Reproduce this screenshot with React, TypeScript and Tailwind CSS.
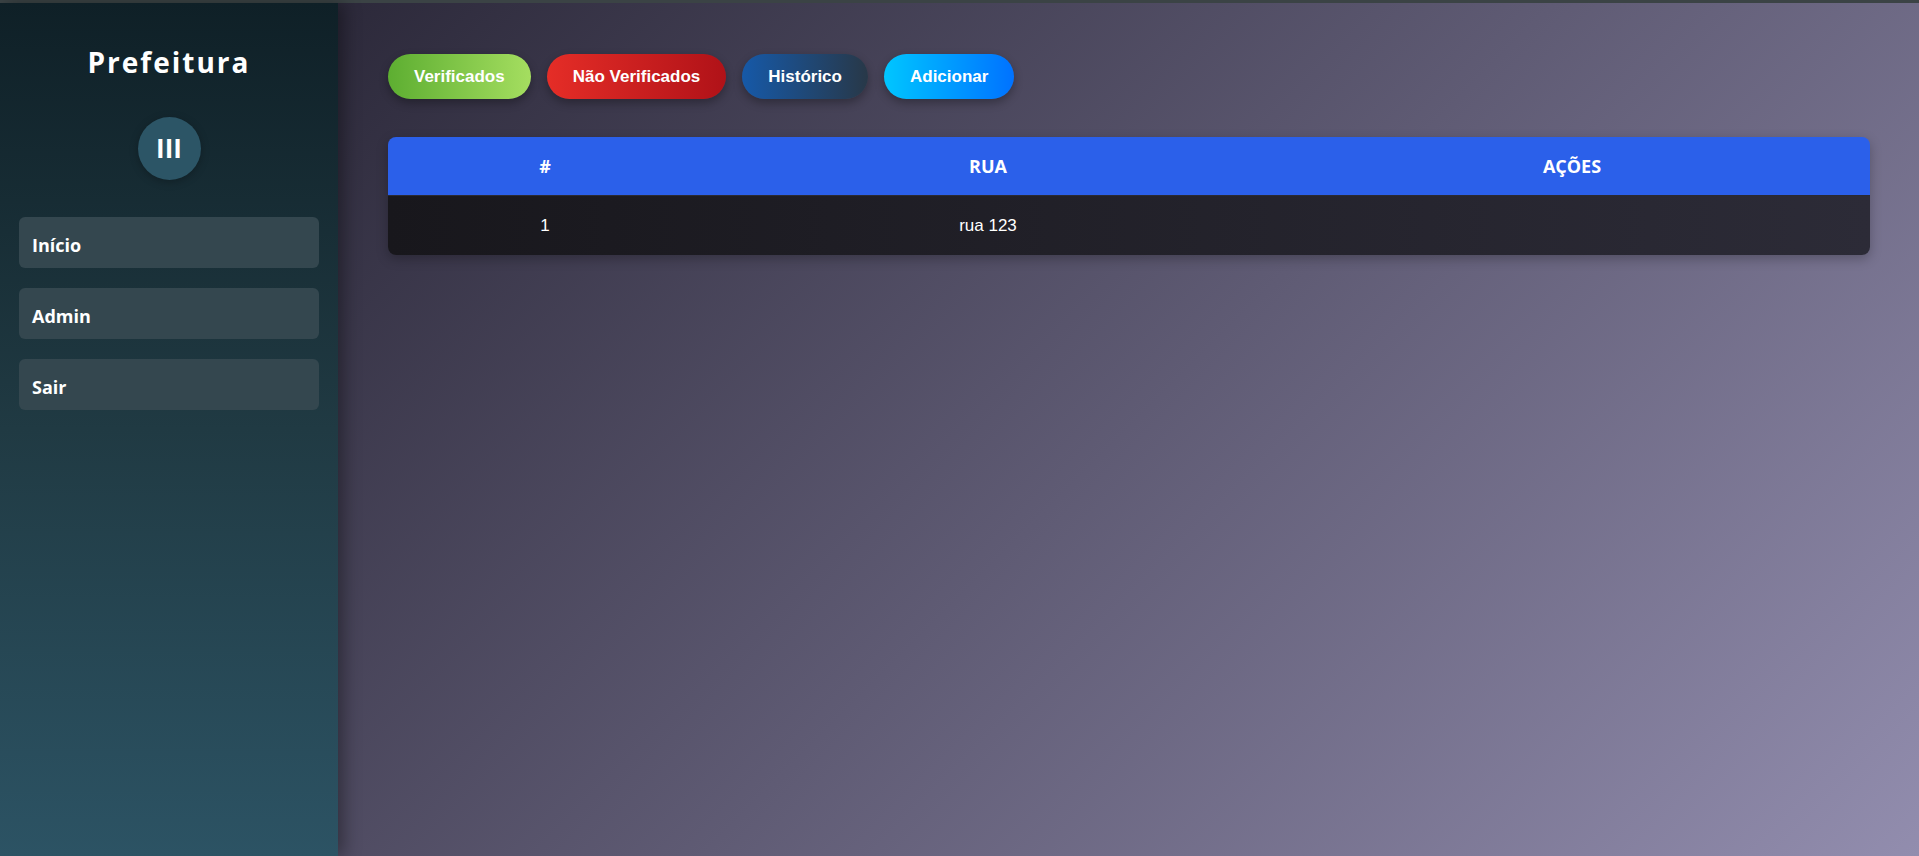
const buttons = [
  { label: "Verificados", cls: "bg-[linear-gradient(90deg,#5dae31,#a5de60)]" },
  { label: "Não Verificados", cls: "bg-[linear-gradient(90deg,#e52d27,#b01218)]" },
  { label: "Histórico", cls: "bg-[linear-gradient(90deg,#1659a8,#283848)]" },
  { label: "Adicionar", cls: "bg-[linear-gradient(90deg,#00c6ff,#0072ff)]" },
];

const navItems = ["Início", "Admin", "Sair"];

const rows = [{ id: 1, rua: "rua 123" }];

export default function App() {
  return (
    <div className="flex h-[856px] flex-col overflow-hidden bg-[#2d2a3b]">
      <div className="h-[3px] shrink-0 bg-[#3b4345]" />
      <div className="flex min-h-0 flex-1">
        <aside className="relative z-10 flex w-[338px] shrink-0 flex-col items-center bg-[linear-gradient(180deg,#0f2027,#203a43_50%,#2c5364)] shadow-[6px_0_16px_rgba(0,0,0,0.35)] font-['Open_Sans',sans-serif] text-white">
          <h1 className="mt-[40px] text-[28px] font-bold leading-[38px] tracking-[2px]">Prefeitura</h1>
          <div className="mt-[36px] flex h-[63px] w-[63px] items-center justify-center rounded-full bg-[#2c5566] text-[26px] font-bold shadow-[0_2px_8px_rgba(0,0,0,0.25)]">
            III
          </div>
          <nav className="mt-[37px] flex w-full flex-col gap-[20px] px-[19px]">
            {navItems.map((n) => (
              <a
                key={n}
                href="#"
                className="flex h-[51px] items-center rounded-md bg-[#34474f] px-[13px] pt-[6px] text-[18px] font-bold"
              >
                {n}
              </a>
            ))}
          </nav>
        </aside>

        <main className="flex-1 bg-[linear-gradient(135deg,#2c293a,#928dae)] pl-[50px] pr-[49px] pt-[51px]">
          <div className="flex gap-[16px] font-['Liberation_Sans',Arial,sans-serif]">
            {buttons.map((b) => (
              <button
                key={b.label}
                className={`flex h-[45px] items-center justify-center rounded-full px-[26px] text-[17px] font-bold text-white shadow-[0_4px_10px_rgba(0,0,0,0.3)] ${b.cls}`}
              >
                {b.label}
              </button>
            ))}
          </div>

          <div className="mt-[38px] w-full overflow-hidden rounded-lg shadow-[0_4px_12px_rgba(0,0,0,0.25)]">
            <div className="grid h-[58px] grid-cols-[314px_572px_1fr] items-center bg-[#2b60ea] font-['Open_Sans',sans-serif] text-[18px] font-bold uppercase text-white">
              <div className="text-center">#</div>
              <div className="text-center">Rua</div>
              <div className="text-center">Ações</div>
            </div>
            {rows.map((r) => (
              <div
                key={r.id}
                className="grid h-[60px] grid-cols-[314px_572px_1fr] items-center border-t border-[#2a2a33] bg-[linear-gradient(90deg,#18171c,#2c2b37)] font-['Liberation_Sans',Arial,sans-serif] text-[17px] text-white"
              >
                <div className="text-center">{r.id}</div>
                <div className="text-center">{r.rua}</div>
                <div />
              </div>
            ))}
          </div>
        </main>
      </div>
    </div>
  );
}
